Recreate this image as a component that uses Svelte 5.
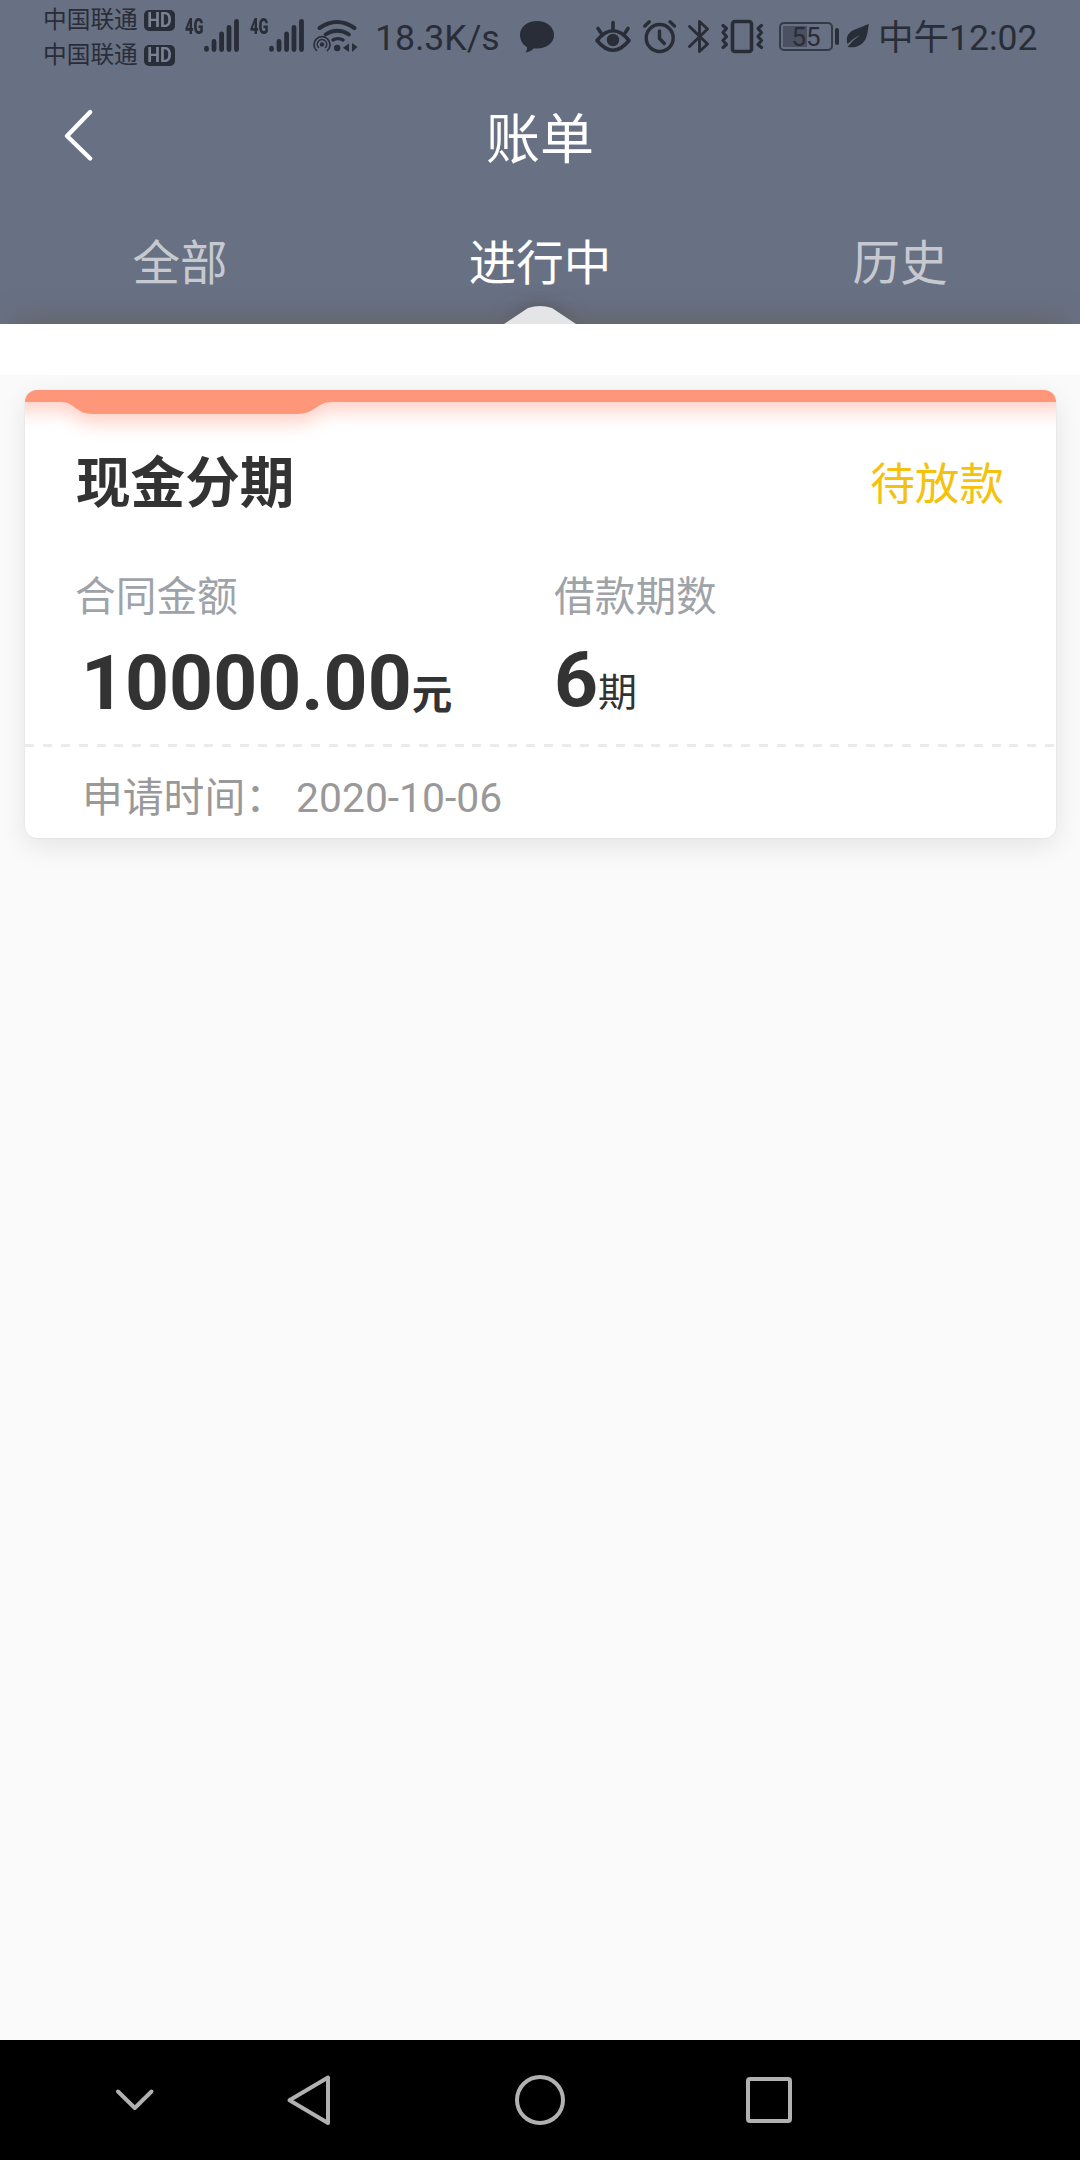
<script lang="ts">
	interface Bill {
		name: string;
		status: string;
		amount: string;
		periods: number;
		appliedAt: string;
	}

	const tabs = ['全部', '进行中', '历史'];
	const carriers = ['中国联通', '中国联通'];

	const bills: Bill[] = [
		{
			name: '现金分期',
			status: '待放款',
			amount: '10000.00',
			periods: 6,
			appliedAt: '2020-10-06'
		}
	];

	let active = $state(1);
</script>

{#snippet signal()}
	<div class="signal">
		<span class="network">4G</span>
		<svg width="36" height="80" viewBox="0 0 36 80" stroke="currentColor" stroke-width="4.8" stroke-linecap="round">
			<path d="M2.5 48.2v1.2M10 41.5v8M17.6 34v15.5M25 27.5v22M32.5 21.5v28" />
		</svg>
	</div>
{/snippet}

<div class="screen">
	<header class="header">
		<div class="status-bar">
			<div class="carriers">
				{#each carriers as carrier}
					<div class="carrier">{carrier}<span class="hd"><b>HD</b></span></div>
				{/each}
			</div>
			{@render signal()}
			{@render signal()}

			<!-- wifi with hotspot -->
			<svg class="wifi" width="46" height="80" viewBox="312 0 46 80" fill="none" stroke="currentColor" stroke-linecap="round">
				<path d="M319.5 28q17.5-12 35 0" stroke-width="4" />
				<path d="M325.5 34.5q12-7.5 23.5 0" stroke-width="3.8" />
				<path d="M333 40q5-2.8 10 0" stroke-width="3.4" />
				<path d="M316.500 50.500a8 8 0 1 1 11 0" stroke-width="1.700" />
				<path d="M318.500 47.500a4.700 4.700 0 1 1 7 0" stroke-width="1.600" />
				<circle cx="322" cy="44.500" r="2.200" fill="currentColor" stroke="none" />
				<circle cx="337.200" cy="48" r="3.200" fill="currentColor" stroke="none" />
				<path d="M349 43.500v8.500l-6-4.200zM352 43v9l5.500-5z" fill="currentColor" stroke="none" />
			</svg>

			<span class="speed">18.3K/s</span>

			<svg class="bubble" width="36" height="80" viewBox="519 0 36 80" fill="currentColor">
				<path d="M537 21c9.600 0 17 6 17 14s-7.400 13.500-17 13.500c-1 0-2 0-3-.2-2.500 2.500-5.500 4-8.500 4.200 1-1.600 2-3.500 1.500-5.500-4.500-2.500-7-7-7-12 0-8 7.400-14 17-14z" />
			</svg>

			<svg class="eye" width="38" height="80" viewBox="594 0 38 80" fill="none" stroke="currentColor" stroke-width="3.600" stroke-linecap="round" stroke-linejoin="round">
				<path d="M597 40.500q16-19.500 32 0-16 19.500-32 0z" />
				<path d="M613 22.500v6M598 28.500l3 4.500M628 28.500l-3 4.500" />
				<circle cx="613" cy="40" r="6.200" fill="currentColor" stroke="none" />
			</svg>

			<svg class="alarm" width="36" height="80" viewBox="642 0 36 80" fill="none" stroke="currentColor" stroke-width="3.400" stroke-linecap="round">
				<circle cx="659.700" cy="38" r="13.500" />
				<path d="M659.500 31v7.500l4.800 5" />
				<path d="M644.800 26l4.500-4.200M674.500 26l-4.500-4.200" />
			</svg>

			<svg class="bluetooth" width="24" height="80" viewBox="686 0 24 80" fill="none" stroke="currentColor" stroke-width="2.900" stroke-linejoin="round" stroke-linecap="round">
				<path d="M689.500 26.500l18 17.500-8 7.500v-30l8 7.500-18 17.500" />
			</svg>

			<svg class="vibrate" width="44" height="80" viewBox="720 0 44 80" fill="none" stroke="currentColor" stroke-linecap="round" stroke-linejoin="round">
				<rect x="732.500" y="21.500" width="19" height="30" rx="2.500" stroke-width="3.600" />
				<path d="M723 25.500l3.500 3-3.500 4 3.500 4-3.500 4 3.500 4-3.500 3M761.500 25.500l-3.500 3 3.500 4-3.500 4 3.500 4-3.500 4 3.500 3" stroke-width="3.200" />
			</svg>

			<div class="battery"><span class="level">55</span></div>
			<span class="battery-tip"></span>

			<svg class="leaf" width="24" height="80" viewBox="846 0 24 80">
				<path d="M869 24c-1 0-7 3-14 5.500s-9.500 8-7.500 14.500q7-6.500 12.500-9-7 5-12.500 12c9 1.500 16-2.500 18.500-9s1.600-9.500 3-14z" fill="currentColor" />
			</svg>

			<span class="clock">中午12:02</span>
		</div>

		<div class="title-bar">
			<button class="back" aria-label="返回">
				<svg width="32" height="56" viewBox="0 0 32 56" fill="none" stroke="#fff" stroke-width="4.400" stroke-linecap="round" stroke-linejoin="round">
					<path d="M27.200 5L4 29 27.200 51.500" />
				</svg>
			</button>
			<h1>账单</h1>
		</div>

		<nav class="tabs">
			{#each tabs as tab, i}
				<button class="tab" class:active={i === active} onclick={() => (active = i)}>
					{tab}
					{#if i === active}
						<svg class="notch" width="120" height="50" viewBox="0 0 120 50">
							<path d="M24 50l24-16q12-4 24 0L96 50z" fill="#e3e5e7" />
						</svg>
					{/if}
				</button>
			{/each}
		</nav>
	</header>

	<div class="band"></div>

	<main class="list">
		{#each bills as bill}
			<article class="card">
				<svg class="ribbon" width="1031" height="60" viewBox="0 0 1031 60">
					<path d="M-30 -20H1061V12H307C291 12 291 24 271 24H69C50 24 50 12 36 12H-30z" fill="#fe967a" />
				</svg>
				<div class="card-head">
					<h2>{bill.name}</h2>
					<span class="state">{bill.status}</span>
				</div>
				<div class="figures">
					<div class="figure">
						<span class="label">合同金额</span>
						<span class="value amount">{bill.amount}<small>元</small></span>
					</div>
					<div class="figure">
						<span class="label">借款期数</span>
						<span class="value count">{bill.periods}<small>期</small></span>
					</div>
				</div>
				<div class="divider"></div>
				<div class="applied">申请时间： <span>{bill.appliedAt}</span></div>
			</article>
		{/each}
	</main>

	<footer class="system-nav">
		<svg width="1080" height="120" viewBox="0 0 1080 120" fill="none" stroke="#b1b1b1" stroke-width="4" stroke-linecap="round" stroke-linejoin="round">
			<path d="M118 51.500l16.800 16.500 16.700-16.500" />
			<path d="M328 37.500v45.500L289.500 60.200z" />
			<circle cx="540" cy="60" r="23" />
			<rect x="748" y="39" width="42" height="42" rx="2" />
		</svg>
	</footer>
</div>

<style>
	:global(body) {
		background: #fafafa;
	}

	.screen {
		display: flex;
		flex-direction: column;
		width: 1080px;
		height: 2160px;
		background: #fafafa;
		font-family: Roboto, 'Noto Sans CJK SC', sans-serif;
	}

	button {
		border: 0;
		padding: 0;
		background: none;
		font-family: inherit;
	}

	svg {
		display: block;
		flex: none;
	}

	.header {
		position: relative;
		height: 324px;
		background: #687083;
		overflow: hidden;
	}

	/* soft shade cast upwards by the white band */
	.header::after {
		content: '';
		position: absolute;
		left: 20px;
		right: 20px;
		top: 324px;
		height: 20px;
		box-shadow: 0 0 28px 4px rgba(100, 96, 94, 0.8);
	}

	.status-bar {
		display: flex;
		height: 80px;
		padding-left: 43px;
		color: #292d38;
	}

	.carriers {
		width: 142px;
		padding-top: 3px;
	}

	.carrier {
		display: flex;
		align-items: center;
		height: 35px;
		font-size: 23.7px;
		line-height: 37px;
	}

	.hd {
		width: 31px;
		height: 21px;
		margin: 0 0 1px 6px;
		border-radius: 5px;
		background: #292d38;
		color: #7b8293;
		font-size: 20px;
		line-height: 21px;
		text-align: center;
	}

	.hd b {
		display: block;
		font-weight: 700;
		transform: scaleX(0.9);
	}

	.signal {
		display: flex;
		width: 65px;
	}

	.network {
		width: 19px;
		font-size: 21.5px;
		line-height: 53px;
		font-weight: 900;
		white-space: nowrap;
		transform: scaleX(0.68);
		transform-origin: 0 50%;
	}

	.wifi {
		margin-left: -3px;
	}

	.speed {
		width: 143px;
		margin-left: 17px;
		font-size: 35.6px;
		line-height: 76px;
	}

	.bubble {
		margin-left: 1px;
	}

	.eye {
		margin-left: 39px;
	}

	.alarm {
		margin-left: 10px;
	}

	.bluetooth {
		margin-left: 8px;
	}

	.vibrate {
		margin-left: 10px;
	}

	.battery {
		width: 54px;
		height: 29px;
		margin: 22px 0 0 15px;
		box-sizing: border-box;
		border: 2px solid #353a47;
		border-radius: 5px;
		background: linear-gradient(90deg, #4b5160 52%, transparent 52%) 2px 2px / 46px 21px no-repeat;
	}

	.level {
		display: block;
		font-size: 26px;
		line-height: 26px;
		text-align: center;
	}

	.battery-tip {
		width: 4px;
		height: 17px;
		margin: 28px 7px 0 2px;
		border-radius: 2px;
		background: #292d38;
	}

	.clock {
		margin-left: 8px;
		font-size: 35.5px;
		line-height: 76px;
		white-space: nowrap;
	}

	.title-bar {
		display: grid;
		grid-template-columns: 120px 1fr 120px;
		height: 120px;
	}

	.back {
		padding: 0 0 13px 63px;
	}

	h1 {
		margin: 0;
		color: #fff;
		font-size: 54px;
		line-height: 122px;
		font-weight: 400;
		text-align: center;
	}

	.tabs {
		display: grid;
		grid-template-columns: repeat(3, 1fr);
	}

	.tab {
		position: relative;
		height: 124px;
		padding-top: 5px;
		color: #c6c9cf;
		font-size: 47.5px;
		line-height: 119px;
		text-align: center;
	}

	.tab.active {
		color: #fff;
	}

	.notch {
		position: absolute;
		left: 120px;
		bottom: 0;
		z-index: 1;
		overflow: visible;
		filter: drop-shadow(0 0 9px rgba(70, 70, 75, 0.6));
	}

	.band {
		height: 51px;
		background: #fff;
	}

	.list {
		flex: 1;
		padding: 15px 24px 0 25px;
	}

	.card {
		position: relative;
		height: 448px;
		border-radius: 12px;
		background: #fff;
		box-shadow: 0 8px 28px rgba(0, 0, 0, 0.09), 0 0 2px rgba(0, 0, 0, 0.1);
		overflow: hidden;
	}

	.ribbon {
		position: absolute;
		left: 0;
		top: 0;
		overflow: visible;
		filter: drop-shadow(0 9px 9px rgba(254, 140, 115, 0.4));
	}

	.card-head {
		position: relative;
		display: flex;
		justify-content: space-between;
		padding: 68px 52px 0 51px;
		line-height: 50px;
	}

	h2 {
		margin: 0;
		color: #333;
		font-size: 54.6px;
		font-weight: 700;
	}

	.state {
		padding-top: 2px;
		margin-bottom: -2px;
		color: #f4c20d;
		font-size: 44.6px;
	}

	.figures {
		display: grid;
		grid-template-columns: 479px 1fr;
		margin: 65px 0 0 50px;
	}

	.figure {
		display: flex;
		flex-direction: column;
		gap: 15px;
	}

	.label {
		color: #9ea3a9;
		font-size: 40.7px;
		line-height: 49px;
		margin-bottom: 1px;
	}

	.value {
		height: 90px;
		color: #333;
		font-size: 76.8px;
		line-height: 90px;
		font-weight: 700;
	}

	.amount {
		padding-left: 6px;
	}

	.count {
		margin-top: -3px;
	}

	.value small {
		font-size: 40.5px;
		line-height: 1;
	}

	.count small {
		font-size: 39px;
		font-weight: 400;
	}

	.divider {
		height: 3px;
		margin-top: 16px;
		background: repeating-linear-gradient(90deg, #ebebeb 0 9px, transparent 9px 17.9px);
	}

	.applied {
		padding: 13px 0 0 57px;
		color: #999;
		font-size: 40.8px;
		line-height: 77px;
	}

	.system-nav {
		height: 120px;
		background: #000;
	}
</style>
